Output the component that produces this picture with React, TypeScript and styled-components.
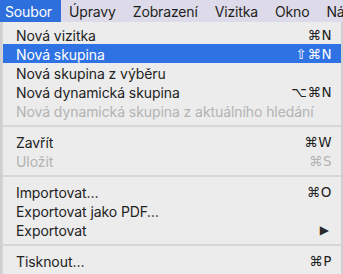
import { type JSX } from 'react';
import styled, { createGlobalStyle } from 'styled-components';

type Entry =
  | { kind: 'sep' }
  | {
      kind: 'item';
      label: string;
      shortcut?: string;
      disabled?: boolean;
      active?: boolean;
      submenu?: boolean;
    };

const menus = ['Soubor', 'Úpravy', 'Zobrazení', 'Vizitka', 'Okno', 'Nápověda'];

const entries: Entry[] = [
  { kind: 'item', label: 'Nová vizitka', shortcut: '⌘N' },
  { kind: 'item', label: 'Nová skupina', shortcut: '⇧⌘N', active: true },
  { kind: 'item', label: 'Nová skupina z výběru' },
  { kind: 'item', label: 'Nová dynamická skupina', shortcut: '⌥⌘N' },
  {
    kind: 'item',
    label: 'Nová dynamická skupina z aktuálního hledání',
    disabled: true,
  },
  { kind: 'sep' },
  { kind: 'item', label: 'Zavřít', shortcut: '⌘W' },
  { kind: 'item', label: 'Uložit', shortcut: '⌘S', disabled: true },
  { kind: 'sep' },
  { kind: 'item', label: 'Importovat…', shortcut: '⌘O' },
  { kind: 'item', label: 'Exportovat jako PDF…' },
  { kind: 'item', label: 'Exportovat', submenu: true },
  { kind: 'sep' },
  { kind: 'item', label: 'Tisknout…', shortcut: '⌘P' },
];

const App = (): JSX.Element => (
  <>
    <GlobalStyle />
    <Screen>
      <MenuBar>
        {menus.map((m, i) => (
          <BarItem
            key={m}
            $open={i === 0}
            $first={i === 0}
          >
            {m}
          </BarItem>
        ))}
      </MenuBar>
      <Panel>
        {entries.map((e, i) =>
          e.kind === 'sep' ? (
            <Separator key={`sep-${i}`} />
          ) : (
            <Row
              key={e.label}
              $active={e.active}
              $disabled={e.disabled}
            >
              <Label>{e.label}</Label>
              {e.shortcut != null && <Shortcut>{e.shortcut}</Shortcut>}
              {e.submenu && <Arrow>▶</Arrow>}
            </Row>
          ),
        )}
      </Panel>
    </Screen>
  </>
);

export default App;

const GlobalStyle = createGlobalStyle`
  html, body {
    margin: 0;
    padding: 0;
    background: #c9c9cc;
    overflow: hidden;
  }
  body {
    font-family: Inter, "Noto Sans", "Liberation Sans", sans-serif;
    font-size: 14px;
    -webkit-font-smoothing: antialiased;
  }
`;

const Screen = styled.div`
  width: 343px;
  height: 274px;
  display: flex;
  flex-direction: column;
  overflow: hidden;
  background: #cfcfd3;
`;

const MenuBar = styled.div`
  height: 22px;
  flex: none;
  display: flex;
  align-items: stretch;
  background: #dddbe9;
  white-space: nowrap;
`;

const BarItem = styled.div<{ $open?: boolean; $first?: boolean }>`
  display: flex;
  align-items: center;
  padding: 0 8.5px 0 ${({ $first }) => ($first ? '5px' : '8.5px')};
  color: ${({ $open }) => ($open ? '#ffffff' : '#1e1e22')};
  background: ${({ $open }) => ($open ? '#2d6fdc' : 'transparent')};
  letter-spacing: -0.15px;
`;

const Panel = styled.div`
  flex: 1;
  margin: 0 2px 0 2px;
  padding: 3px 0 4px;
  background: #ececec;
  border-left: 1px solid #d6d6d6;
`;

const Row = styled.div<{ $active?: boolean; $disabled?: boolean }>`
  height: 19px;
  display: flex;
  align-items: center;
  padding: 1px 9px 0 13px;
  box-sizing: border-box;
  background: ${({ $active }) => ($active ? '#2e72e3' : 'transparent')};
  color: ${({ $active, $disabled }) =>
    $active ? '#ffffff' : $disabled ? '#b3b3b3' : '#232323'};
  letter-spacing: -0.08px;
`;

const Label = styled.span`
  flex: 1;
  white-space: nowrap;
`;

const Shortcut = styled.span`
  font-family: "DejaVu Sans", Inter, sans-serif;
  font-size: 13.5px;
  letter-spacing: 0.5px;
`;

const Arrow = styled.span`
  font-family: "DejaVu Sans", sans-serif;
  font-size: 12px;
  color: #2a2a2a;
  padding-right: 3px;
`;

const Separator = styled.div`
  height: 12px;
  display: flex;
  align-items: center;

  &::after {
    content: '';
    flex: 1;
    height: 2px;
    background: #d7d7d7;
  }
`;
